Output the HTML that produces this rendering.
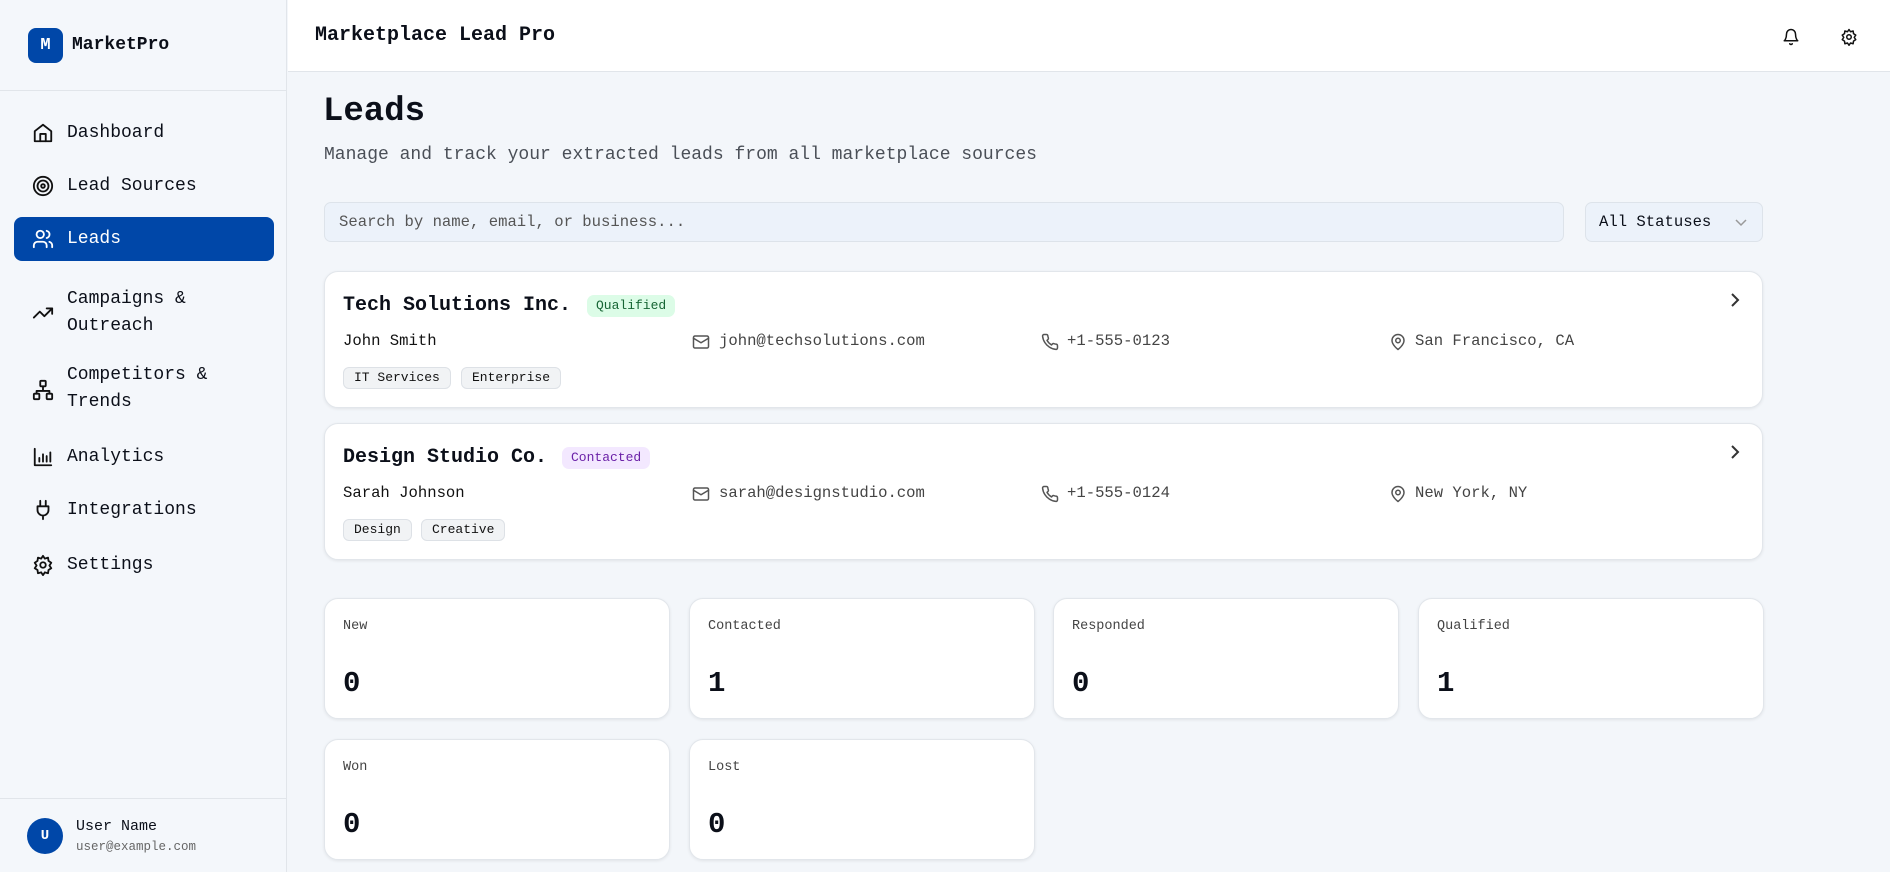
<!DOCTYPE html>
<html><head><meta charset="utf-8"><style>
*{margin:0;padding:0;box-sizing:border-box}
body{width:1890px;height:872px;overflow:hidden;background:#f3f6fa;font-family:"Liberation Mono",monospace;color:#0b0f19;position:relative}
.a{position:absolute}
.side{left:0;top:0;width:287px;height:872px;background:#f4f7fb;border-right:1px solid #e1e5ea}
.nav{position:absolute;left:14px;width:260px;height:44px;display:flex;align-items:center;font-size:18px}
.nav svg{position:absolute;left:18px}
.nav span{position:absolute;left:53px;line-height:27px}
.ic{fill:none;stroke:#111;stroke-width:2;stroke-linecap:round;stroke-linejoin:round}
.card{position:absolute;left:324px;width:1439px;height:137px;background:#fff;border:1px solid #e2e6eb;border-radius:14px;box-shadow:0 1px 3px rgba(0,0,0,.08)}
.ct{position:absolute;left:18px;top:22px;font-size:20px;font-weight:bold}
.badge{position:absolute;top:22px;height:22px;border-radius:7px;font-size:13px;line-height:22px;padding:0 9px}
.row{position:absolute;top:60px;font-size:15.6px;color:#444}
.row svg{position:absolute;left:0;top:1px}
.tag{position:absolute;top:95px;height:22px;border:1px solid #dde1e6;background:#f1f3f5;border-radius:6px;font-size:13px;line-height:20px;padding:0 10px;color:#111}
.st{position:absolute;width:346px;height:121px;background:#fff;border:1px solid #e2e6eb;border-radius:14px;box-shadow:0 1px 3px rgba(0,0,0,.08)}
.st .l{position:absolute;left:18px;top:20px;font-size:13.5px;color:#444}
.st .n{position:absolute;left:18px;top:68px;font-size:29px;font-weight:bold}
.g{fill:none;stroke:#555;stroke-width:2;stroke-linecap:round;stroke-linejoin:round}
</style></head><body>
<div class="a side">
  <div class="a" style="left:28px;top:28px;width:35px;height:35px;background:#0047a8;border-radius:8px;color:#fff;font-weight:bold;font-size:17px;text-align:center;line-height:35px">M</div>
  <div class="a" style="left:72px;top:35px;font-size:18px;font-weight:bold">MarketPro</div>
  <div class="a" style="left:0;top:90px;width:287px;border-top:1px solid #e1e5ea"></div>
  <div class="nav" style="top:111px"><svg class="ic" width="22" height="22" viewBox="0 0 24 24"><path d="M3 10l9-7 9 7v11H3z"/><path d="M9 21v-8h6v8"/></svg><span>Dashboard</span></div>
  <div class="nav" style="top:164px"><svg class="ic" width="22" height="22" viewBox="0 0 24 24"><circle cx="12" cy="12" r="10"/><circle cx="12" cy="12" r="6"/><circle cx="12" cy="12" r="2"/></svg><span>Lead Sources</span></div>
  <div class="nav" style="top:217px;background:#0047a8;border-radius:8px;color:#fff"><svg class="ic" style="stroke:#fff" width="22" height="22" viewBox="0 0 24 24"><circle cx="9" cy="7" r="4"/><path d="M2 21v-2a4 4 0 014-4h6a4 4 0 014 4v2"/><path d="M16 3.1a4 4 0 010 7.8M22 21v-2a4 4 0 00-3-3.9"/></svg><span>Leads</span></div>
  <div class="nav" style="top:286px;height:54px"><svg class="ic" width="22" height="22" viewBox="0 0 24 24"><path d="M22 7l-8.5 8.5-5-5L2 17"/><path d="M16 7h6v6"/></svg><span style="top:0">Campaigns &amp;<br>Outreach</span></div>
  <div class="nav" style="top:362px;height:56px"><svg class="ic" width="22" height="22" viewBox="0 0 24 24"><rect x="9" y="2" width="6" height="6" rx="1"/><rect x="2" y="16" width="6" height="6" rx="1"/><rect x="16" y="16" width="6" height="6" rx="1"/><path d="M5 16v-3h14v3M12 12V8"/></svg><span style="top:0">Competitors &amp;<br>Trends</span></div>
  <div class="nav" style="top:435px"><svg class="ic" width="22" height="22" viewBox="0 0 24 24"><path d="M3 3v18h18M8 17v-4M12 17V9M16 17v-6M20 17V7"/></svg><span>Analytics</span></div>
  <div class="nav" style="top:488px"><svg class="ic" width="22" height="22" viewBox="0 0 24 24"><path d="M9 2v6M15 2v6M6 8h12v4a6 6 0 01-12 0zM12 18v4"/></svg><span>Integrations</span></div>
  <div class="nav" style="top:543px"><svg class="ic" width="22" height="22" viewBox="0 0 24 24"><circle cx="12" cy="12" r="3"/><path d="M12 2l2 3 3.5-1 .5 3.5 3 2-2 3 2 3-3 2-.5 3.5-3.5-1-2 3-2-3-3.5 1-.5-3.5-3-2 2-3-2-3 3-2L6.5 4 10 5z"/></svg><span>Settings</span></div>
  <div class="a" style="left:0;top:798px;width:287px;border-top:1px solid #e1e5ea"></div>
  <div class="a" style="left:27px;top:818px;width:36px;height:36px;border-radius:50%;background:#0047a8;color:#fff;font-weight:bold;font-size:14px;text-align:center;line-height:36px">U</div>
  <div class="a" style="left:76px;top:818px;font-size:15px">User Name</div>
  <div class="a" style="left:76px;top:840px;font-size:12.5px;color:#666">user@example.com</div>
</div>
<div class="a" style="left:288px;top:0;width:1602px;height:72px;background:#fff;border-bottom:1px solid #e1e5ea"></div>
<div class="a" style="left:315px;top:24px;font-size:20px;font-weight:bold">Marketplace Lead Pro</div>
<svg class="a ic" style="left:1782px;top:28px" width="18" height="18" viewBox="0 0 24 24"><path d="M6 8a6 6 0 0112 0c0 7 3 9 3 9H3s3-2 3-9M10.3 21a1.9 1.9 0 003.4 0"/></svg>
<svg class="a ic" style="left:1840px;top:28px" width="18" height="18" viewBox="0 0 24 24"><circle cx="12" cy="12" r="3"/><path d="M12 2l2 3 3.5-1 .5 3.5 3 2-2 3 2 3-3 2-.5 3.5-3.5-1-2 3-2-3-3.5 1-.5-3.5-3-2 2-3-2-3 3-2L6.5 4 10 5z"/></svg>
<div class="a" style="left:323px;top:93px;font-size:34px;font-weight:bold">Leads</div>
<div class="a" style="left:324px;top:145px;font-size:18px;color:#4a4f57">Manage and track your extracted leads from all marketplace sources</div>
<div class="a" style="left:324px;top:202px;width:1240px;height:40px;background:#ecf2fa;border:1px solid #dde3ea;border-radius:7px;font-size:15.6px;color:#555;line-height:38px;padding-left:14px">Search by name, email, or business...</div>
<div class="a" style="left:1585px;top:202px;width:178px;height:40px;background:#ecf2fa;border:1px solid #dde3ea;border-radius:7px;font-size:15.6px;line-height:38px;padding-left:13px">All Statuses<svg class="a" style="left:149px;top:14px" width="12" height="10" viewBox="0 0 12 10"><path d="M1 3l5 5 5-5" fill="none" stroke="#999" stroke-width="1.5"/></svg></div>

<div class="card" style="top:271px">
  <div class="ct">Tech Solutions Inc.</div>
  <div class="badge" style="left:262px;top:23px;background:#dcfce7;color:#166534">Qualified</div>
  <svg class="a" style="left:1403px;top:20px" width="14" height="16" viewBox="0 0 14 16"><path d="M4 2l6 6-6 6" fill="none" stroke="#333" stroke-width="2"/></svg>
  <div class="row" style="left:18px;color:#111">John Smith</div>
  <div class="row" style="left:367px;padding-left:27px"><svg class="g" width="18" height="18" viewBox="0 0 24 24"><rect x="2" y="4" width="20" height="16" rx="2"/><path d="M2 7l10 6 10-6"/></svg>john@techsolutions.com</div>
  <div class="row" style="left:716px;padding-left:26px"><svg class="g" width="18" height="18" viewBox="0 0 24 24"><path d="M22 16.9v3a2 2 0 01-2.2 2 19.8 19.8 0 01-8.6-3.1 19.5 19.5 0 01-6-6A19.8 19.8 0 012.1 4.2 2 2 0 014.1 2h3a2 2 0 012 1.7c.1 1 .4 1.9.7 2.8a2 2 0 01-.5 2.1L8 9.9a16 16 0 006 6l1.3-1.3a2 2 0 012.1-.4c.9.3 1.8.6 2.8.7a2 2 0 011.7 2z"/></svg>+1-555-0123</div>
  <div class="row" style="left:1064px;padding-left:26px"><svg class="g" width="18" height="18" viewBox="0 0 24 24"><path d="M20 10c0 6-8 12-8 12S4 16 4 10a8 8 0 0116 0z"/><circle cx="12" cy="10" r="3"/></svg>San Francisco, CA</div>
  <div class="tag" style="left:18px">IT Services</div>
  <div class="tag" style="left:136px">Enterprise</div>
</div>
<div class="card" style="top:423px">
  <div class="ct">Design Studio Co.</div>
  <div class="badge" style="left:237px;top:23px;background:#f3e8ff;color:#6b21a8">Contacted</div>
  <svg class="a" style="left:1403px;top:20px" width="14" height="16" viewBox="0 0 14 16"><path d="M4 2l6 6-6 6" fill="none" stroke="#333" stroke-width="2"/></svg>
  <div class="row" style="left:18px;color:#111">Sarah Johnson</div>
  <div class="row" style="left:367px;padding-left:27px"><svg class="g" width="18" height="18" viewBox="0 0 24 24"><rect x="2" y="4" width="20" height="16" rx="2"/><path d="M2 7l10 6 10-6"/></svg>sarah@designstudio.com</div>
  <div class="row" style="left:716px;padding-left:26px"><svg class="g" width="18" height="18" viewBox="0 0 24 24"><path d="M22 16.9v3a2 2 0 01-2.2 2 19.8 19.8 0 01-8.6-3.1 19.5 19.5 0 01-6-6A19.8 19.8 0 012.1 4.2 2 2 0 014.1 2h3a2 2 0 012 1.7c.1 1 .4 1.9.7 2.8a2 2 0 01-.5 2.1L8 9.9a16 16 0 006 6l1.3-1.3a2 2 0 012.1-.4c.9.3 1.8.6 2.8.7a2 2 0 011.7 2z"/></svg>+1-555-0124</div>
  <div class="row" style="left:1064px;padding-left:26px"><svg class="g" width="18" height="18" viewBox="0 0 24 24"><path d="M20 10c0 6-8 12-8 12S4 16 4 10a8 8 0 0116 0z"/><circle cx="12" cy="10" r="3"/></svg>New York, NY</div>
  <div class="tag" style="left:18px">Design</div>
  <div class="tag" style="left:96px">Creative</div>
</div>

<div class="st" style="left:324px;top:598px"><div class="l">New</div><div class="n">0</div></div>
<div class="st" style="left:689px;top:598px"><div class="l">Contacted</div><div class="n">1</div></div>
<div class="st" style="left:1053px;top:598px"><div class="l">Responded</div><div class="n">0</div></div>
<div class="st" style="left:1418px;top:598px"><div class="l">Qualified</div><div class="n">1</div></div>
<div class="st" style="left:324px;top:739px"><div class="l">Won</div><div class="n">0</div></div>
<div class="st" style="left:689px;top:739px"><div class="l">Lost</div><div class="n">0</div></div>
</body></html>
